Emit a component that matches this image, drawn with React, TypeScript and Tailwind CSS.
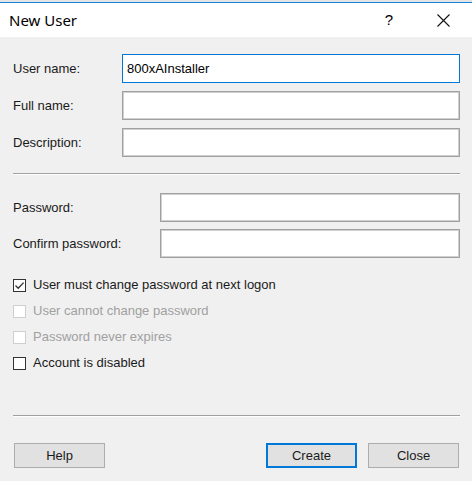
import React from 'react';

const font = { fontFamily: '"Liberation Sans", Arial, sans-serif' };

const Field: React.FC<{ label: string; labelWidth: string; value?: string; focused?: boolean }> = ({
  label,
  labelWidth,
  value,
  focused,
}) => (
  <div className="flex items-center">
    <div className={`${labelWidth} shrink-0 text-[13px] text-[#1a1a1a]`}>{label}</div>
    <div
      className={`flex-1 h-[29px] bg-white flex items-center px-[4px] text-[13px] text-black border ${
        focused ? 'border-[#0078d7]' : 'border-[#a0a0a0] shadow-[inset_0_0_0_1px_#d0d0d0]'
      }`}
    >
      {value}
    </div>
  </div>
);

const Check: React.FC<{ label: string; checked?: boolean; disabled?: boolean }> = ({ label, checked, disabled }) => (
  <div className="flex items-center h-[26px]">
    <div
      className={`w-[13px] h-[13px] bg-white border flex items-center justify-center ${
        disabled ? 'border-[#cfcfcf]' : 'border-[#333333]'
      }`}
    >
      {checked && (
        <svg width="11" height="11" viewBox="0 0 11 11">
          <path d="M1.5 5.5 L4.2 8.2 L9.6 2.6" fill="none" stroke="#333" strokeWidth="1.3" />
        </svg>
      )}
    </div>
    <span className={`ml-[7px] text-[13px] ${disabled ? 'text-[#a0a0a0]' : 'text-[#1a1a1a]'}`}>{label}</span>
  </div>
);

const Btn: React.FC<{ label: string; primary?: boolean }> = ({ label, primary }) => (
  <div
    className={`w-[91px] h-[25px] bg-[#e1e1e1] flex items-center justify-center text-[13px] text-[#1a1a1a] ${
      primary ? 'border-2 border-[#0078d7]' : 'border border-[#adadad]'
    }`}
  >
    {label}
  </div>
);

export default function App() {
  return (
    <div className="w-[472px] h-[481px] bg-[#f0f0f0] flex flex-col overflow-hidden" style={font}>
      <div className="h-[2px] bg-[#e4e4e4]" />
      <div className="h-px bg-[#1883d7]" />
      <div className="h-[34px] bg-white flex items-center pl-[9px]">
        <span className="text-[15px] text-black" style={{ fontFamily: '"Noto Sans", "Liberation Sans", sans-serif' }}>
          New User
        </span>
        <span className="ml-auto text-[15px] text-black">?</span>
        <svg className="ml-[44px] mr-[22px]" width="13" height="13" viewBox="0 0 13 13">
          <path d="M0.5 0.5 L12.5 12.5 M12.5 0.5 L0.5 12.5" stroke="#111" strokeWidth="1.1" />
        </svg>
      </div>

      <div className="flex flex-col pl-[13px] pr-[12px]">
        <div className="mt-[17px] flex flex-col gap-[8px]">
          <Field label="User name:" labelWidth="w-[109px]" value="800xAInstaller" focused />
          <Field label="Full name:" labelWidth="w-[109px]" />
          <Field label="Description:" labelWidth="w-[109px]" />
        </div>

        <div className="mt-[16px] h-px bg-[#a0a0a0]" />
        <div className="h-px bg-white" />

        <div className="mt-[18px] flex flex-col gap-[7px]">
          <Field label="Password:" labelWidth="w-[147px]" />
          <Field label="Confirm password:" labelWidth="w-[147px]" />
        </div>

        <div className="mt-[14px] flex flex-col">
          <Check label="User must change password at next logon" checked />
          <Check label="User cannot change password" disabled />
          <Check label="Password never expires" disabled />
          <Check label="Account is disabled" />
        </div>

        <div className="mt-[39px] h-px bg-[#a0a0a0]" />
        <div className="h-px bg-white" />

        <div className="mt-[26px] flex items-center pl-px pr-px">
          <Btn label="Help" />
          <div className="ml-auto flex gap-[11px]">
            <Btn label="Create" primary />
            <Btn label="Close" />
          </div>
        </div>
      </div>
    </div>
  );
}
